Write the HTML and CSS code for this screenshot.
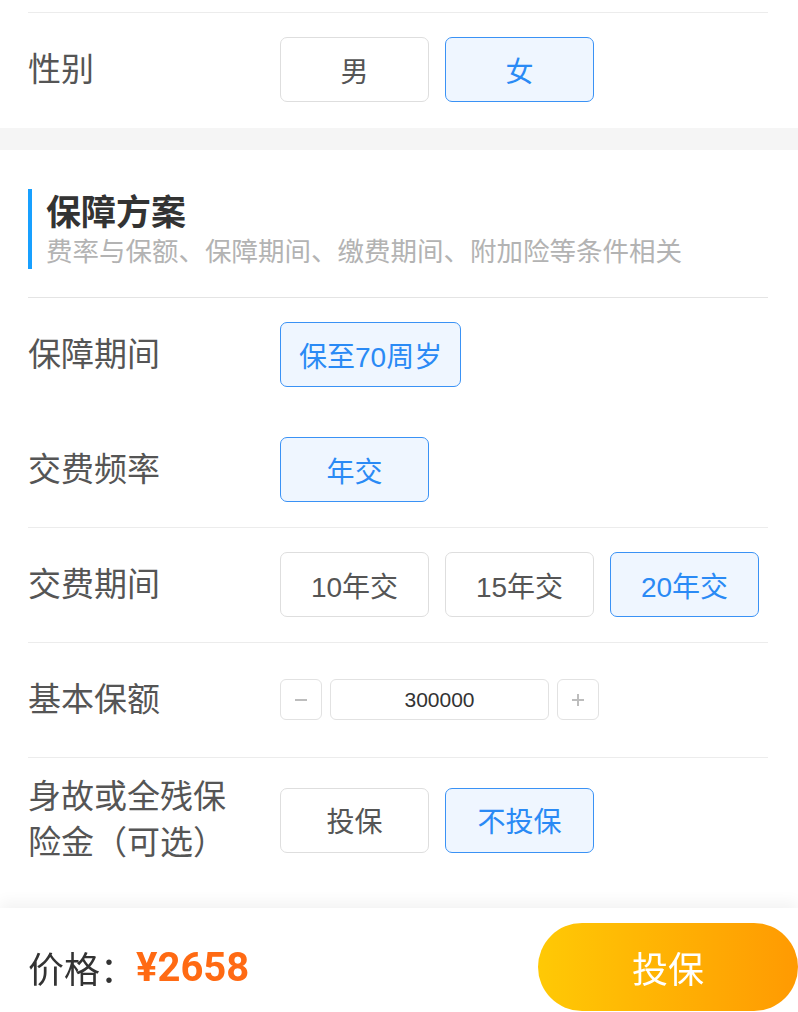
FILE: index.html
```html
<!DOCTYPE html>
<html lang="zh-CN">
<head>
<meta charset="utf-8">
<title>保障方案</title>
<link rel="stylesheet" href="styles.css">
</head>
<body>
<div class="card">
  <div class="row row-prev"></div>
  <div class="row row-last">
    <div class="label">性别</div>
    <div class="options">
      <div class="opt">男</div>
      <div class="opt active">女</div>
    </div>
  </div>
</div>
<div class="band"></div>
<div class="card">
  <div class="sec-head">
    <div class="sec-bar">
      <div class="sec-title">保障方案</div>
      <div class="sec-sub">费率与保额、保障期间、缴费期间、附加险等条件相关</div>
    </div>
  </div>
  <div class="row row-plain">
    <div class="label">保障期间</div>
    <div class="options">
      <div class="opt active">保至70周岁</div>
    </div>
  </div>
  <div class="row">
    <div class="label">交费频率</div>
    <div class="options">
      <div class="opt active">年交</div>
    </div>
  </div>
  <div class="row">
    <div class="label">交费期间</div>
    <div class="options">
      <div class="opt">10年交</div>
      <div class="opt">15年交</div>
      <div class="opt active">20年交</div>
    </div>
  </div>
  <div class="row">
    <div class="label">基本保额</div>
    <div class="options stepper-wrap">
      <div class="stepper">
        <div class="step-btn">
          <svg width="14" height="14" viewBox="0 0 14 14"><path d="M1 7H13" stroke="#bdbdbd" stroke-width="2"/></svg>
        </div>
        <div class="step-input">300000</div>
        <div class="step-btn">
          <svg width="14" height="14" viewBox="0 0 14 14"><path d="M1 7H13M7 1V13" stroke="#bdbdbd" stroke-width="2"/></svg>
        </div>
      </div>
    </div>
  </div>
  <div class="row row-plain row-tall">
    <div class="label">身故或全残保险金（可选）</div>
    <div class="options">
      <div class="opt">投保</div>
      <div class="opt active">不投保</div>
    </div>
  </div>
  <div class="row row-plain row-spacer"></div>
</div>
<div class="footer">
  <div class="price">价格：<span class="price-val">¥2658</span></div>
  <div class="buy">投保</div>
</div>
</body>
</html>
```
FILE: styles.css
```css
* { box-sizing: border-box; }
html, body {
  margin: 0;
  padding: 0;
  background: #ffffff;
}
body {
  width: 798px;
  font-family: "Liberation Sans", "Noto Sans CJK SC", sans-serif;
  color: #333;
  padding-bottom: 40px;
}
.card {
  background: #fff;
  padding: 0 30px 0 28px;
}
.band {
  height: 22px;
  background: #f5f5f5;
}
.row {
  display: flex;
  align-items: center;
  padding: 24px 0 25px;
  border-bottom: 1px solid #ececec;
}
.row-prev {
  height: 13px;
  padding: 0;
}
.row-last, .row-plain {
  border-bottom: none;
}
.row-last { padding-bottom: 26px; }
.row-plain { padding-bottom: 26px; }
.row-tall { padding: 16px 0 16px; }
.row-spacer { height: 120px; padding: 0; }
.label {
  width: 252px;
  flex: none;
  font-size: 33px;
  line-height: 46px;
  color: #555;
  padding-right: 40px;
}
.options {
  display: flex;
  gap: 16px;
  min-height: 65px;
  align-items: center;
}
.opt {
  min-width: 149px;
  height: 65px;
  padding: 0 18px;
  border: 1px solid #dedede;
  border-radius: 7px;
  display: flex;
  align-items: center;
  justify-content: center;
  font-size: 28px;
  color: #555;
  background: #fff;
}
.opt.active {
  border-color: #3a92f5;
  background: #eff6ff;
  color: #2a8af5;
}
.sec-head {
  padding: 39px 0 28px;
  border-bottom: 1px solid #e4e4e4;
}
.sec-bar {
  border-left: 4px solid #18a0ff;
  padding-left: 14px;
}
.sec-title {
  font-family: "Noto Sans CJK SC", sans-serif;
  font-weight: 700;
  font-size: 35px;
  line-height: 42px;
  color: #333;
}
.sec-sub {
  margin-top: 4px;
  font-size: 26.5px;
  line-height: 34px;
  color: #b3b3b3;
}
.stepper {
  display: flex;
  gap: 8px;
  height: 41px;
}
.step-btn {
  width: 42px;
  border: 1px solid #e2e2e2;
  border-radius: 6px;
  display: flex;
  align-items: center;
  justify-content: center;
}
.step-input {
  width: 219px;
  border: 1px solid #e2e2e2;
  border-radius: 6px;
  display: flex;
  align-items: center;
  justify-content: center;
  font-size: 21px;
  color: #333;
}
.footer {
  position: fixed;
  left: 0;
  right: 0;
  bottom: 0;
  height: 104px;
  background: #fff;
  box-shadow: 0 -6px 14px rgba(0, 0, 0, 0.05);
  display: flex;
  justify-content: space-between;
  align-items: flex-start;
  padding: 15px 0 0 28px;
}
.price {
  height: 88px;
  display: flex;
  align-items: center;
  font-size: 36px;
  color: #333;
}
.price-val {
  font-family: "Roboto", "Liberation Sans", sans-serif;
  font-weight: 700;
  font-size: 40px;
  color: #ff6a13;
}
.buy {
  width: 260px;
  height: 88px;
  border-radius: 44px;
  background: linear-gradient(to right, #ffc905, #ff9a02);
  color: #fff;
  font-size: 36px;
  display: flex;
  align-items: center;
  justify-content: center;
}
```
